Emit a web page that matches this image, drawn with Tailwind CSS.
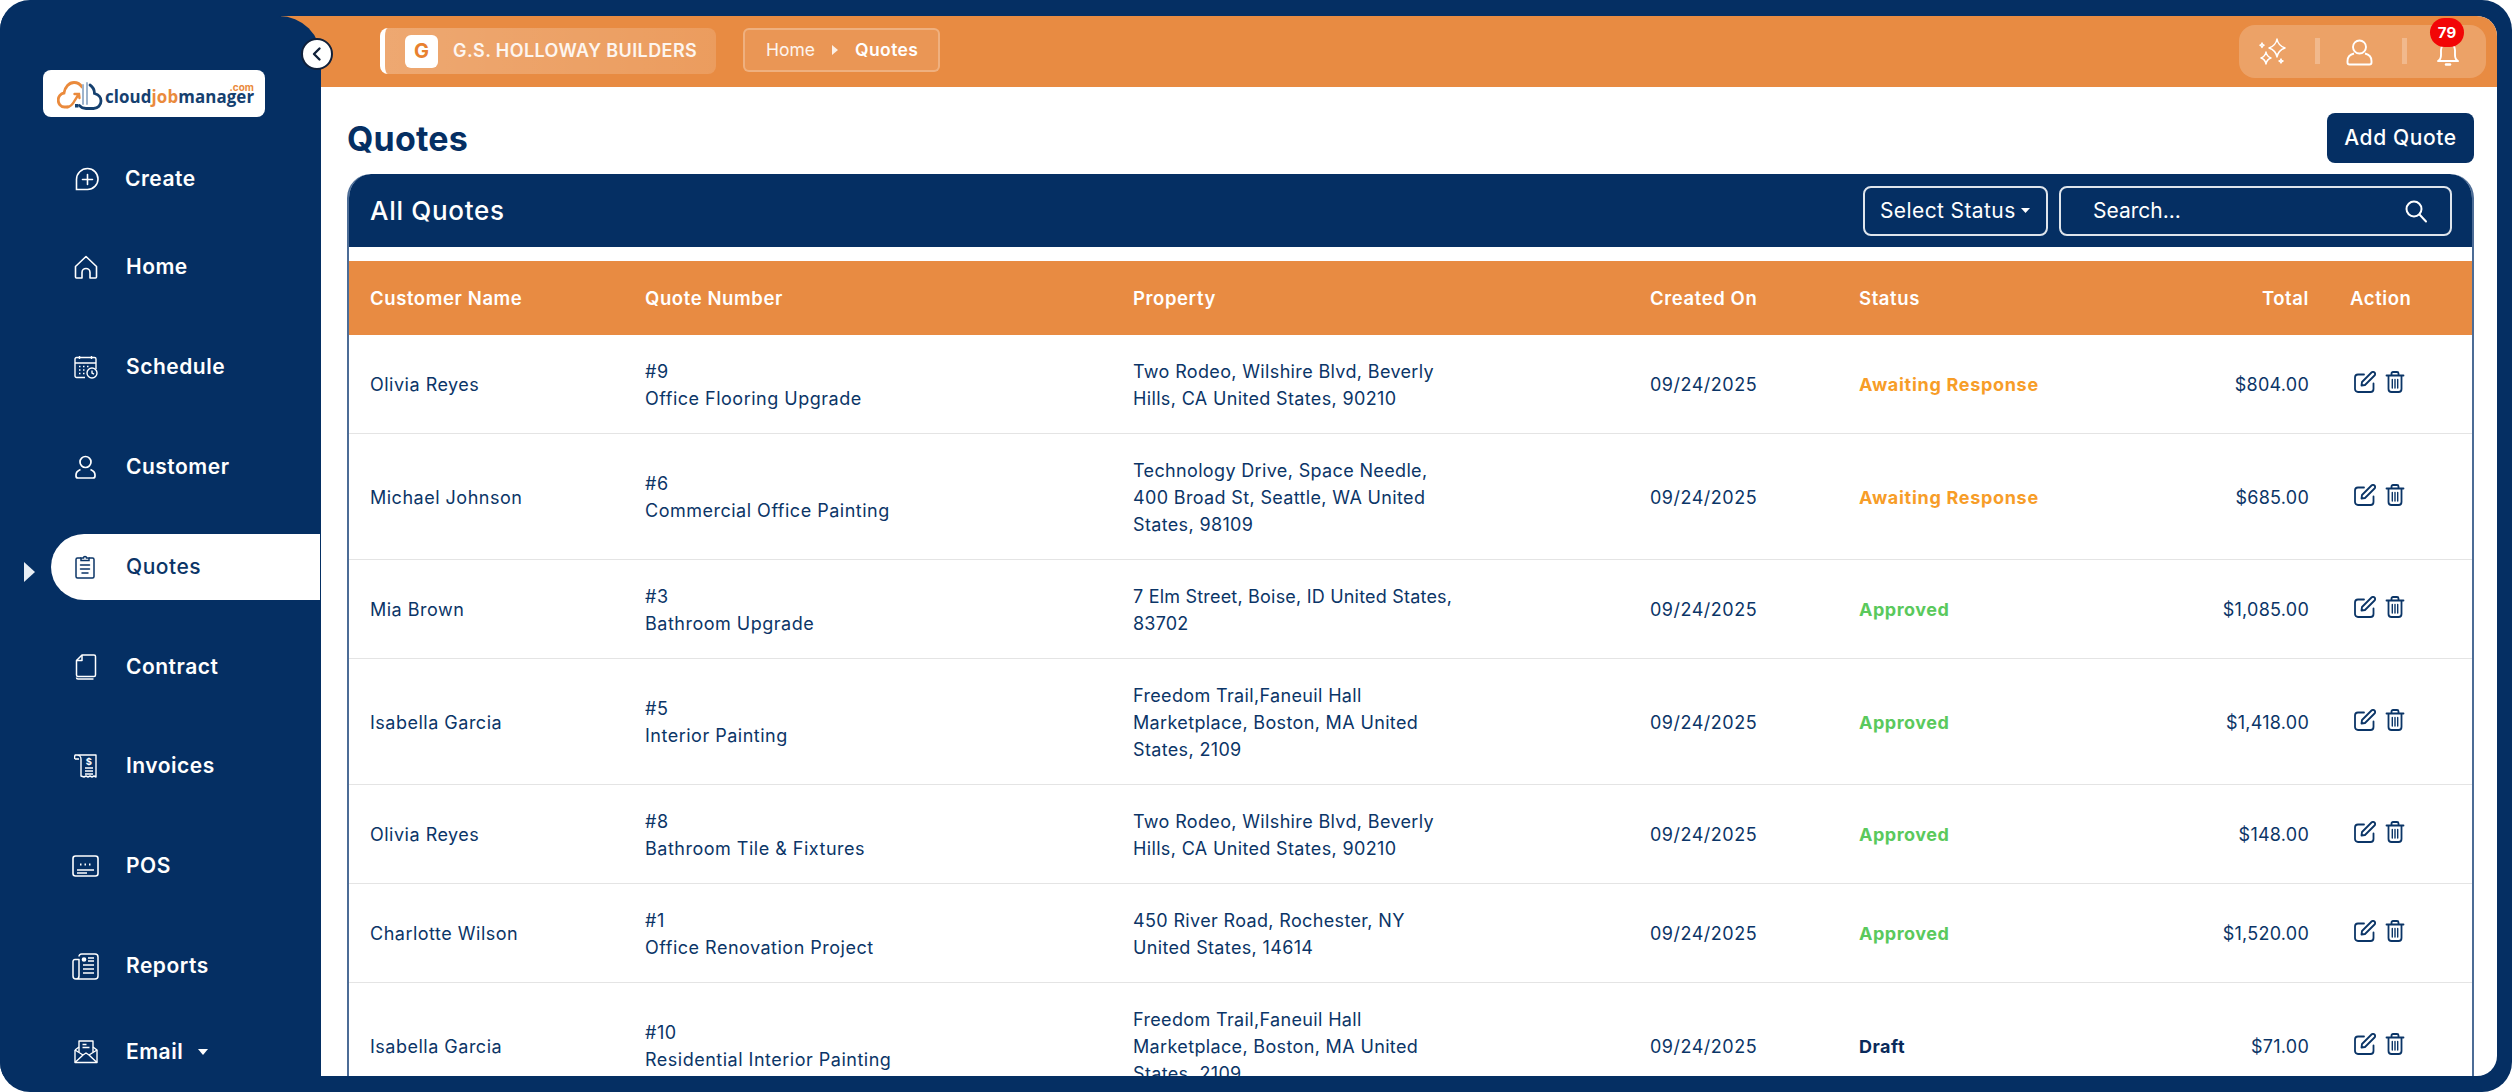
<!DOCTYPE html>
<html lang="en">
<head>
<meta charset="utf-8">
<title>Quotes</title>
<script src="https://cdn.jsdelivr.net/npm/@tailwindcss/browser@4"></script>
</head>
<body class="bg-white">
<div class="w-[2512px] h-[1092px] overflow-hidden bg-[#052f63] rounded-[30px] flex pt-4 pb-4 pr-[15px] font-['Inter',sans-serif] text-[#0b3567]">
  <!-- Sidebar -->
  <aside class="relative z-10 w-[321px] shrink-0 bg-[#052f63] rounded-tr-[42px] text-white">
    <button class="absolute left-[301px] top-[22px] w-8 h-8 rounded-full bg-white border-2 border-[#10203a] flex items-center justify-center">
      <svg class="w-4 h-4" viewBox="0 0 16 16" fill="none" stroke="#10203a" stroke-width="2.4" stroke-linecap="round" stroke-linejoin="round"><path d="M10.5 2.5 5 8l5.5 5.5"/></svg>
    </button>
    <div class="ml-[43px] mt-[54px] w-[222px] h-[47px] bg-white rounded-lg flex items-center pl-[14px] relative">
      <svg class="w-[46px] h-[29px] shrink-0 mt-[3px]" viewBox="0 0 46 29" fill="none" stroke-linecap="round">
        <path d="M11 26H7.500C3.500 26 1.200 22.500 1.200 19c0-3.500 2.600-6.500 5.800-7C8 6 12 1.500 17 1.500c3.500 0 6.500 2 8 4.500" stroke="#ea8a3c" stroke-width="2.800"/>
        <path d="M10 26c4 0 6-3 8-7l3.500-5.500M17.500 13h4.500l.5 4" stroke="#ea8a3c" stroke-width="2.400"/>
        <path d="M26 4v19M30 2v21" stroke="#9db3cc" stroke-width="2"/>
        <path d="M33 4c3 2 4.500 5 4.500 8.500 4 1 6.500 4 6.500 7.500 0 4-3 7.500-7.500 7.500H29c-3 0-5-1-6.500-3" stroke="#15406f" stroke-width="2.800"/>
        <rect x="18" y="23" width="3.500" height="3.500" fill="#15406f" stroke="none"/>
      </svg>
      <span class="text-[16.900px] font-bold tracking-[0.1px] leading-none mt-[7px] font-['Open_Sans',sans-serif] text-[#15406f] whitespace-nowrap ml-[2px]">cloud<span class="text-[#ea8a3c]">job</span>manager</span>
      <span class="absolute right-[11px] top-[12px] text-[10px] font-bold leading-none text-[#ea8a3c]">.com</span>
    </div>
    <nav class="absolute inset-x-0 top-0 text-[21px] font-semibold tracking-[0.5px]">
      <a class="absolute left-[75px] top-[149px] h-7 flex items-center gap-[26px]">
        <svg class="w-6 h-6" viewBox="0 0 24 24" fill="none" stroke="#fff" stroke-width="1.600"><path d="M12.500 1.500a10.500 10.500 0 1 1 0 21H1.500V12.500a11 11 0 0 1 11-11z"/><path d="M12.500 7.500v10M7.500 12.500h10" stroke-linecap="round"/></svg>
        <span>Create</span>
      </a>
      <a class="absolute left-[74px] top-[237px] h-7 flex items-center gap-[28px]">
        <svg class="w-6 h-6" viewBox="0 0 24 24" fill="none" stroke="#fff" stroke-width="1.600" stroke-linejoin="round"><path d="M1.500 11.500 12 1.500l10.500 10V22a1 1 0 0 1-1 1H16v-5.500a4 4 0 0 0-8 0V23H2.500a1 1 0 0 1-1-1z"/></svg>
        <span>Home</span>
      </a>
      <a class="absolute left-[74px] top-[337px] h-7 flex items-center gap-[28px]">
        <svg class="w-6 h-6" viewBox="0 0 24 24" fill="none" stroke="#fff" stroke-width="1.400"><path d="M11 22.500H2.500a1.500 1.500 0 0 1-1.500-1.500V4a1.500 1.500 0 0 1 1.500-1.500h18A1.500 1.500 0 0 1 22 4v10"/><path d="M1 8h21M5.500 1v3M17.500 1v3"/><circle cx="18" cy="18" r="5"/><path d="M18 15.500V18l2 1.200"/><path d="M5 11.500h1.500M9 11.500h1.500M13 11.500h1.500M5 15h1.500M9 15h1.500M5 18.500h1.500M9 18.500h1.500" stroke-width="1.600"/></svg>
        <span>Schedule</span>
      </a>
      <a class="absolute left-[75px] top-[437px] h-7 flex items-center gap-[28px]">
        <svg class="w-[21px] h-[24px] mr-[2px]" viewBox="0 0 21 24" fill="none" stroke="#fff" stroke-width="1.700"><circle cx="10.500" cy="7" r="5.500"/><path d="M5.500 14.500C3 15.500 1 17.500 1 20v1a2 2 0 0 0 2 2h15a2 2 0 0 0 2-2v-1c0-2.500-2-4.500-4.500-5.500"/></svg>
        <span>Customer</span>
      </a>
      <svg class="absolute left-[24px] top-[546px] w-[11px] h-[20px]" viewBox="0 0 11 20"><path d="M0 0l11 10L0 20z" fill="#e9eef4"/></svg>
      <a class="absolute left-[51px] top-[518px] w-[269px] h-[66px] bg-white rounded-l-full flex items-center pl-[24px] gap-[31px] text-[#0b3567] font-medium">
        <svg class="w-[20px] h-[24px]" viewBox="0 0 20 24" fill="none" stroke="#0b3567" stroke-width="1.500"><path d="M6 3H2.500A1.500 1.500 0 0 0 1 4.500v17A1.500 1.500 0 0 0 2.500 23h15a1.500 1.500 0 0 0 1.500-1.500v-17A1.500 1.500 0 0 0 17.500 3H14"/><path d="M6 5.500V3h2.500a1.500 1.500 0 0 1 3 0H14v2.500z"/><path d="M5.500 10h9M5.500 14h9M7 18h6" stroke-linecap="round"/></svg>
        <span>Quotes</span>
      </a>
      <a class="absolute left-[75px] top-[637px] h-7 flex items-center gap-[29px]">
        <svg class="w-[22px] h-[26px]" viewBox="0 0 22 26" fill="none" stroke="#fff" stroke-width="1.500" stroke-linejoin="round"><path d="M7 1h12a1.500 1.500 0 0 1 1.500 1.500V21a1.500 1.500 0 0 1-1.500 1.500H3A1.500 1.500 0 0 1 1.500 21V6.500z"/><path d="M7 1v5.500H1.500"/><path d="M1.500 23.500c0 1 .8 1.500 1.500 1.500h15.500" /></svg>
        <span>Contract</span>
      </a>
      <a class="absolute left-[74px] top-[736px] h-7 flex items-center gap-[28px]">
        <svg class="w-6 h-6" viewBox="0 0 24 24" fill="none" stroke="#fff" stroke-width="1.400" stroke-linejoin="round"><path d="M5 1h17v22l-2-1-2 1-2-1-2 1-2-1-2 1-3-1V5a4 4 0 0 0-4-4zM1 5a4 4 0 0 1 .2-4H5M1 5h4"/><path d="M11 14h8M11 17h8M11 20h8" stroke-width="1.500"/><text x="15" y="11" text-anchor="middle" font-family="Inter" font-size="9.500" font-weight="700" fill="#fff" stroke="none">$</text></svg>
        <span>Invoices</span>
      </a>
      <a class="absolute left-[72px] top-[836px] h-7 flex items-center gap-[27px]">
        <svg class="w-[27px] h-[22px]" viewBox="0 0 27 22" fill="none" stroke="#fff" stroke-width="1.600"><rect x="1" y="1" width="25" height="20" rx="2.500"/><path d="M5 15h17M5 18h10"/><path d="M8 9.500h1.500M12.500 9.500H14M17 9.500h1.500" stroke-width="2"/></svg>
        <span>POS</span>
      </a>
      <a class="absolute left-[72px] top-[936px] h-7 flex items-center gap-[27px]">
        <svg class="w-[27px] h-[27px]" viewBox="0 0 27 27" fill="none" stroke="#fff" stroke-width="1.500" stroke-linejoin="round"><path d="M7 3.500A2.500 2.500 0 0 1 9.500 1H23a3 3 0 0 1 3 3v19a3 3 0 0 1-3 3H4a3 3 0 0 1-3-3V8.500A2 2 0 0 1 3 6.500h4V23a3 3 0 0 1-3 3"/><circle cx="12" cy="6.500" r="1.600" fill="#fff"/><path d="M16 5h6M16 8h6M11 12h11M11 16h11M11 20h11"/></svg>
        <span>Reports</span>
      </a>
      <a class="absolute left-[74px] top-[1022px] h-7 flex items-center gap-[28px]">
        <svg class="w-6 h-6" viewBox="0 0 24 24" fill="none" stroke="#fff" stroke-width="1.400" stroke-linejoin="round"><path d="M1 10v12.500h22V10L19 7"/><path d="M1 10l4-3M1 22.500 9 15l3-2 3 2 8 7.500"/><path d="M1 10l8 5M23 10l-8 5"/><path d="M5 12V1h14v11"/><path d="M8.500 4.500h4M8.500 7.500h7" stroke-width="1.500"/></svg>
        <span>Email</span>
        <svg class="w-[10px] h-[6px] -ml-[13px]" viewBox="0 0 10 6"><path d="M0 0h10L5 6z" fill="#fff"/></svg>
      </a>
    </nav>
  </aside>

  <!-- Main -->
  <main class="flex-1 min-w-0 -ml-[40px] rounded-r-[20px] overflow-hidden bg-white flex flex-col">
    <header class="h-[71px] shrink-0 bg-[#e88b42] flex items-center pl-[99px] pr-[11px] text-white">
      <div class="h-[46px] w-[336px] flex items-center bg-gradient-to-r from-white/25 to-white/15 rounded-lg border-l-[5px] border-white pl-[20px] gap-[15px] -mt-[1px]">
        <span class="w-[33px] h-[33px] bg-white rounded-md flex items-center justify-center text-[#e8812f] text-[20px] font-bold leading-none">G</span>
        <span class="text-[18px] font-semibold tracking-[0.4px] whitespace-nowrap text-white/90 -mt-[2px]">G.S. HOLLOWAY BUILDERS</span>
      </div>
      <div class="ml-[27px] h-[44px] w-[197px] flex items-center bg-white/10 border-2 border-white/25 rounded-md pl-[21px] -mt-[3px]">
        <span class="text-[17.500px] text-white/90">Home</span>
        <svg class="w-[6px] h-[10px] ml-[17px]" viewBox="0 0 6 10"><path d="M0 0l6 5-6 5z" fill="#fff" fill-opacity=".85"/></svg>
        <span class="text-[17.500px] font-semibold tracking-[0.4px] ml-[17px]">Quotes</span>
      </div>
      <div class="ml-auto relative h-[53px] w-[247px] bg-white/20 rounded-2xl -mt-[1px]">
        <svg class="absolute left-[20px] top-[13px] w-[28px] h-[28px]" viewBox="0 0 28 28" fill="none" stroke="#fff" stroke-width="1.500" stroke-linejoin="round"><path d="M18 1c.8 4.800 2.800 7.200 8 9-5.200 1.800-7.200 4.200-8 9-.8-4.800-2.800-7.200-8-9 5.200-1.800 7.200-4.200 8-9z"/><path d="M7 14c.5 3 1.500 4.500 5 6-3.500 1-4.500 3-5 6-.5-3-1.500-5-5-6 3.500-1.500 4.500-3 5-6z"/><path d="M3 5c.2 1.300.7 1.800 2 2.200-1.300.4-1.800.9-2 2.200-.2-1.300-.7-1.800-2-2.200 1.300-.4 1.800-.9 2-2.200zM22 21c.2 1.200.7 1.700 2 2-1.300.3-1.800.8-2 2-.2-1.200-.7-1.700-2-2 1.300-.3 1.800-.8 2-2z"/></svg>
        <span class="absolute left-[76px] top-[13px] w-[5px] h-[26px] bg-white/25"></span>
        <svg class="absolute left-[107px] top-[14px] w-[27px] h-[27px]" viewBox="0 0 27 27" fill="none" stroke="#fff" stroke-width="1.900"><circle cx="13.500" cy="8" r="6.500"/><path d="M8 14.500C4 15.500 1.500 18.500 1.500 22v1.500a2 2 0 0 0 2 2h20a2 2 0 0 0 2-2V22c0-3.500-2.500-6.500-6.500-7.500"/></svg>
        <span class="absolute left-[163px] top-[13px] w-[5px] h-[26px] bg-white/25"></span>
        <svg class="absolute left-[198px] top-[17px] w-[22px] h-[25px]" viewBox="0 0 22 25" fill="none" stroke="#fff" stroke-width="1.900" stroke-linejoin="round"><path d="M1 19c2-1 3-3 3-6V8a7 7 0 0 1 14 0v5c0 3 1 5 3 6z"/><path d="M9 22.500h4" stroke-width="2.500" stroke-linecap="round"/></svg>
        <span class="absolute left-[191px] -top-[7px] w-[34px] h-[29px] rounded-full bg-[#f20606] flex items-center justify-center text-white text-[15px] font-bold leading-none">79</span>
      </div>
    </header>

    <div class="flex-1 min-h-0 pl-[66px] pr-[23px] pt-[26px] flex flex-col">
      <div class="h-[50px] shrink-0 flex items-center justify-between">
        <h1 class="text-[34px] font-bold text-[#052f63] tracking-[0.2px] leading-none mt-[1px]">Quotes</h1>
        <button class="w-[147px] h-[50px] bg-[#052f63] rounded-lg text-white text-[21px] tracking-[0.6px] font-medium">Add Quote</button>
      </div>

      <section class="mt-[11px] flex-1 min-h-0 rounded-t-[24px] overflow-hidden border-x-2 border-[#4c6c96]">
        <div class="-mx-[2px] h-[73px] bg-[#052f63] rounded-t-[24px] flex items-center pl-[23px] pr-[22px] text-white">
          <h2 class="text-[26px] font-medium tracking-[0.7px]">All Quotes</h2>
          <button class="ml-auto w-[185px] h-[50px] rounded-lg border-2 border-[#dfe5ec] flex items-center pl-[15px] text-[21px] tracking-[0.4px] whitespace-nowrap">Select Status
            <svg class="w-[9px] h-[5px] ml-[5px]" viewBox="0 0 9 5"><path d="M0 0h9L4.500 5z" fill="#fff"/></svg>
          </button>
          <div class="ml-[11px] w-[393px] h-[50px] rounded-lg border-2 border-[#dfe5ec] flex items-center pl-[32px] pr-[22px] text-[21px]">
            <span class="flex-1">Search...</span>
            <svg class="w-[24px] h-[24px]" viewBox="0 0 24 24" fill="none" stroke="#fff" stroke-width="2" stroke-linecap="round"><circle cx="10" cy="10" r="7.500"/><path d="M15.500 15.500 22 22.500"/></svg>
          </div>
        </div>
        <div class="h-[14px]"></div>
        <table class="w-full table-fixed border-collapse text-[18px] leading-[27px] tracking-[0.5px]">
          <colgroup>
            <col class="w-[275px]"><col class="w-[488px]"><col class="w-[517px]"><col class="w-[209px]"><col class="w-[362px]"><col class="w-[130px]"><col>
          </colgroup>
          <thead>
            <tr class="h-[74px] bg-[#e88b42] text-white text-left text-[18.500px] tracking-[0.6px]">
              <th class="pl-[21px] font-semibold">Customer Name</th>
              <th class="pl-[21px] font-semibold">Quote Number</th>
              <th class="pl-[21px] font-semibold">Property</th>
              <th class="pl-[21px] font-semibold">Created On</th>
              <th class="pl-[21px] font-semibold">Status</th>
              <th class="pr-[21px] font-semibold text-right">Total</th>
              <th class="pl-[20px] font-semibold">Action</th>
            </tr>
          </thead>
          <tbody>
            <tr class="border-b border-[#e4e4e4]">
              <td class="pl-[21px] pt-[22.500px] pb-[21.500px]">Olivia Reyes</td>
              <td class="pl-[21px] pt-[22.500px] pb-[21.500px]">#9<br>Office Flooring Upgrade</td>
              <td class="pl-[21px] pt-[22.500px] pb-[21.500px] tracking-[0.35px]">Two Rodeo, Wilshire Blvd, Beverly<br>Hills, CA United States, 90210</td>
              <td class="pl-[21px] pt-[22.500px] pb-[21.500px]">09/24/2025</td>
              <td class="pl-[21px] pt-[22.500px] pb-[21.500px] font-bold tracking-[0.7px] text-[#f79d28]">Awaiting Response</td>
              <td class="pr-[21px] pt-[22.500px] pb-[21.500px] text-right tracking-[0.25px]">$804.00</td>
              <td class="pl-[24px]"><div class="flex gap-[9px] -translate-y-[2px]">
                <svg class="w-[22px] h-[22px]" viewBox="0 0 22 22" fill="none" stroke="#0b3567" stroke-width="1.800" stroke-linecap="round" stroke-linejoin="round"><path d="M19.500 12.500V18a3 3 0 0 1-3 3H4a3 3 0 0 1-3-3V6.500a3 3 0 0 1 3-3h6"/><path d="M8 11 17.500 1.500a2 2 0 0 1 3 3L11 14l-3.500.5z"/></svg>
                <svg class="w-[20px] h-[22px]" viewBox="0 0 19 22" fill="none" stroke="#0b3567" stroke-width="1.800" stroke-linecap="round" stroke-linejoin="round"><path d="M1 4.500h17M6 4.500V2.500a1.500 1.500 0 0 1 1.500-1.500h4A1.500 1.500 0 0 1 13 2.500v2M3 4.500V18a3 3 0 0 0 3 3h7a3 3 0 0 0 3-3V4.500"/><path d="M6.800 8.500V17M9.500 8.500V17M12.200 8.500V17" stroke-width="1.400"/></svg>
              </div></td>
            </tr>
            <tr class="border-b border-[#e4e4e4]">
              <td class="pl-[21px] pt-[22.500px] pb-[21.500px]">Michael Johnson</td>
              <td class="pl-[21px] pt-[22.500px] pb-[21.500px]">#6<br>Commercial Office Painting</td>
              <td class="pl-[21px] pt-[22.500px] pb-[21.500px] tracking-[0.35px]">Technology Drive, Space Needle,<br>400 Broad St, Seattle, WA United<br>States, 98109</td>
              <td class="pl-[21px] pt-[22.500px] pb-[21.500px]">09/24/2025</td>
              <td class="pl-[21px] pt-[22.500px] pb-[21.500px] font-bold tracking-[0.7px] text-[#f79d28]">Awaiting Response</td>
              <td class="pr-[21px] pt-[22.500px] pb-[21.500px] text-right tracking-[0.25px]">$685.00</td>
              <td class="pl-[24px]"><div class="flex gap-[9px] -translate-y-[2px]">
                <svg class="w-[22px] h-[22px]" viewBox="0 0 22 22" fill="none" stroke="#0b3567" stroke-width="1.800" stroke-linecap="round" stroke-linejoin="round"><path d="M19.500 12.500V18a3 3 0 0 1-3 3H4a3 3 0 0 1-3-3V6.500a3 3 0 0 1 3-3h6"/><path d="M8 11 17.500 1.500a2 2 0 0 1 3 3L11 14l-3.500.5z"/></svg>
                <svg class="w-[20px] h-[22px]" viewBox="0 0 19 22" fill="none" stroke="#0b3567" stroke-width="1.800" stroke-linecap="round" stroke-linejoin="round"><path d="M1 4.500h17M6 4.500V2.500a1.500 1.500 0 0 1 1.500-1.500h4A1.500 1.500 0 0 1 13 2.500v2M3 4.500V18a3 3 0 0 0 3 3h7a3 3 0 0 0 3-3V4.500"/><path d="M6.800 8.500V17M9.500 8.500V17M12.200 8.500V17" stroke-width="1.400"/></svg>
              </div></td>
            </tr>
            <tr class="border-b border-[#e4e4e4]">
              <td class="pl-[21px] pt-[22.500px] pb-[21.500px]">Mia Brown</td>
              <td class="pl-[21px] pt-[22.500px] pb-[21.500px]">#3<br>Bathroom Upgrade</td>
              <td class="pl-[21px] pt-[22.500px] pb-[21.500px] tracking-[0.2px]">7 Elm Street, Boise, ID United States,<br>83702</td>
              <td class="pl-[21px] pt-[22.500px] pb-[21.500px]">09/24/2025</td>
              <td class="pl-[21px] pt-[22.500px] pb-[21.500px] font-bold text-[#5ac95c]">Approved</td>
              <td class="pr-[21px] pt-[22.500px] pb-[21.500px] text-right tracking-[0.25px]">$1,085.00</td>
              <td class="pl-[24px]"><div class="flex gap-[9px] -translate-y-[2px]">
                <svg class="w-[22px] h-[22px]" viewBox="0 0 22 22" fill="none" stroke="#0b3567" stroke-width="1.800" stroke-linecap="round" stroke-linejoin="round"><path d="M19.500 12.500V18a3 3 0 0 1-3 3H4a3 3 0 0 1-3-3V6.500a3 3 0 0 1 3-3h6"/><path d="M8 11 17.500 1.500a2 2 0 0 1 3 3L11 14l-3.500.5z"/></svg>
                <svg class="w-[20px] h-[22px]" viewBox="0 0 19 22" fill="none" stroke="#0b3567" stroke-width="1.800" stroke-linecap="round" stroke-linejoin="round"><path d="M1 4.500h17M6 4.500V2.500a1.500 1.500 0 0 1 1.500-1.500h4A1.500 1.500 0 0 1 13 2.500v2M3 4.500V18a3 3 0 0 0 3 3h7a3 3 0 0 0 3-3V4.500"/><path d="M6.800 8.500V17M9.500 8.500V17M12.200 8.500V17" stroke-width="1.400"/></svg>
              </div></td>
            </tr>
            <tr class="border-b border-[#e4e4e4]">
              <td class="pl-[21px] pt-[22.500px] pb-[21.500px]">Isabella Garcia</td>
              <td class="pl-[21px] pt-[22.500px] pb-[21.500px]">#5<br>Interior Painting</td>
              <td class="pl-[21px] pt-[22.500px] pb-[21.500px] tracking-[0.35px]">Freedom Trail,Faneuil Hall<br>Marketplace, Boston, MA United<br>States, 2109</td>
              <td class="pl-[21px] pt-[22.500px] pb-[21.500px]">09/24/2025</td>
              <td class="pl-[21px] pt-[22.500px] pb-[21.500px] font-bold text-[#5ac95c]">Approved</td>
              <td class="pr-[21px] pt-[22.500px] pb-[21.500px] text-right tracking-[0.25px]">$1,418.00</td>
              <td class="pl-[24px]"><div class="flex gap-[9px] -translate-y-[2px]">
                <svg class="w-[22px] h-[22px]" viewBox="0 0 22 22" fill="none" stroke="#0b3567" stroke-width="1.800" stroke-linecap="round" stroke-linejoin="round"><path d="M19.500 12.500V18a3 3 0 0 1-3 3H4a3 3 0 0 1-3-3V6.500a3 3 0 0 1 3-3h6"/><path d="M8 11 17.500 1.500a2 2 0 0 1 3 3L11 14l-3.500.5z"/></svg>
                <svg class="w-[20px] h-[22px]" viewBox="0 0 19 22" fill="none" stroke="#0b3567" stroke-width="1.800" stroke-linecap="round" stroke-linejoin="round"><path d="M1 4.500h17M6 4.500V2.500a1.500 1.500 0 0 1 1.500-1.500h4A1.500 1.500 0 0 1 13 2.500v2M3 4.500V18a3 3 0 0 0 3 3h7a3 3 0 0 0 3-3V4.500"/><path d="M6.800 8.500V17M9.500 8.500V17M12.200 8.500V17" stroke-width="1.400"/></svg>
              </div></td>
            </tr>
            <tr class="border-b border-[#e4e4e4]">
              <td class="pl-[21px] pt-[22.500px] pb-[21.500px]">Olivia Reyes</td>
              <td class="pl-[21px] pt-[22.500px] pb-[21.500px]">#8<br>Bathroom Tile &amp; Fixtures</td>
              <td class="pl-[21px] pt-[22.500px] pb-[21.500px] tracking-[0.35px]">Two Rodeo, Wilshire Blvd, Beverly<br>Hills, CA United States, 90210</td>
              <td class="pl-[21px] pt-[22.500px] pb-[21.500px]">09/24/2025</td>
              <td class="pl-[21px] pt-[22.500px] pb-[21.500px] font-bold text-[#5ac95c]">Approved</td>
              <td class="pr-[21px] pt-[22.500px] pb-[21.500px] text-right tracking-[0.25px]">$148.00</td>
              <td class="pl-[24px]"><div class="flex gap-[9px] -translate-y-[2px]">
                <svg class="w-[22px] h-[22px]" viewBox="0 0 22 22" fill="none" stroke="#0b3567" stroke-width="1.800" stroke-linecap="round" stroke-linejoin="round"><path d="M19.500 12.500V18a3 3 0 0 1-3 3H4a3 3 0 0 1-3-3V6.500a3 3 0 0 1 3-3h6"/><path d="M8 11 17.500 1.500a2 2 0 0 1 3 3L11 14l-3.500.5z"/></svg>
                <svg class="w-[20px] h-[22px]" viewBox="0 0 19 22" fill="none" stroke="#0b3567" stroke-width="1.800" stroke-linecap="round" stroke-linejoin="round"><path d="M1 4.500h17M6 4.500V2.500a1.500 1.500 0 0 1 1.500-1.500h4A1.500 1.500 0 0 1 13 2.500v2M3 4.500V18a3 3 0 0 0 3 3h7a3 3 0 0 0 3-3V4.500"/><path d="M6.800 8.500V17M9.500 8.500V17M12.200 8.500V17" stroke-width="1.400"/></svg>
              </div></td>
            </tr>
            <tr class="border-b border-[#e4e4e4]">
              <td class="pl-[21px] pt-[22.500px] pb-[21.500px]">Charlotte Wilson</td>
              <td class="pl-[21px] pt-[22.500px] pb-[21.500px]">#1<br>Office Renovation Project</td>
              <td class="pl-[21px] pt-[22.500px] pb-[21.500px] tracking-[0.35px]">450 River Road, Rochester, NY<br>United States, 14614</td>
              <td class="pl-[21px] pt-[22.500px] pb-[21.500px]">09/24/2025</td>
              <td class="pl-[21px] pt-[22.500px] pb-[21.500px] font-bold text-[#5ac95c]">Approved</td>
              <td class="pr-[21px] pt-[22.500px] pb-[21.500px] text-right tracking-[0.25px]">$1,520.00</td>
              <td class="pl-[24px]"><div class="flex gap-[9px] -translate-y-[2px]">
                <svg class="w-[22px] h-[22px]" viewBox="0 0 22 22" fill="none" stroke="#0b3567" stroke-width="1.800" stroke-linecap="round" stroke-linejoin="round"><path d="M19.500 12.500V18a3 3 0 0 1-3 3H4a3 3 0 0 1-3-3V6.500a3 3 0 0 1 3-3h6"/><path d="M8 11 17.500 1.500a2 2 0 0 1 3 3L11 14l-3.500.5z"/></svg>
                <svg class="w-[20px] h-[22px]" viewBox="0 0 19 22" fill="none" stroke="#0b3567" stroke-width="1.800" stroke-linecap="round" stroke-linejoin="round"><path d="M1 4.500h17M6 4.500V2.500a1.500 1.500 0 0 1 1.500-1.500h4A1.500 1.500 0 0 1 13 2.500v2M3 4.500V18a3 3 0 0 0 3 3h7a3 3 0 0 0 3-3V4.500"/><path d="M6.800 8.500V17M9.500 8.500V17M12.200 8.500V17" stroke-width="1.400"/></svg>
              </div></td>
            </tr>
            <tr>
              <td class="pl-[21px] pt-[22.500px] pb-[21.500px]">Isabella Garcia</td>
              <td class="pl-[21px] pt-[22.500px] pb-[21.500px]">#10<br>Residential Interior Painting</td>
              <td class="pl-[21px] pt-[22.500px] pb-[21.500px] tracking-[0.35px]">Freedom Trail,Faneuil Hall<br>Marketplace, Boston, MA United<br>States, 2109</td>
              <td class="pl-[21px] pt-[22.500px] pb-[21.500px]">09/24/2025</td>
              <td class="pl-[21px] pt-[22.500px] pb-[21.500px] font-bold text-[#0a2a5a]">Draft</td>
              <td class="pr-[21px] pt-[22.500px] pb-[21.500px] text-right tracking-[0.25px]">$71.00</td>
              <td class="pl-[24px]"><div class="flex gap-[9px] -translate-y-[2px]">
                <svg class="w-[22px] h-[22px]" viewBox="0 0 22 22" fill="none" stroke="#0b3567" stroke-width="1.800" stroke-linecap="round" stroke-linejoin="round"><path d="M19.500 12.500V18a3 3 0 0 1-3 3H4a3 3 0 0 1-3-3V6.500a3 3 0 0 1 3-3h6"/><path d="M8 11 17.500 1.500a2 2 0 0 1 3 3L11 14l-3.500.5z"/></svg>
                <svg class="w-[20px] h-[22px]" viewBox="0 0 19 22" fill="none" stroke="#0b3567" stroke-width="1.800" stroke-linecap="round" stroke-linejoin="round"><path d="M1 4.500h17M6 4.500V2.500a1.500 1.500 0 0 1 1.500-1.500h4A1.500 1.500 0 0 1 13 2.500v2M3 4.500V18a3 3 0 0 0 3 3h7a3 3 0 0 0 3-3V4.500"/><path d="M6.800 8.500V17M9.500 8.500V17M12.200 8.500V17" stroke-width="1.400"/></svg>
              </div></td>
            </tr>
          </tbody>
        </table>
      </section>
    </div>
  </main>
</div>
</body>
</html>
